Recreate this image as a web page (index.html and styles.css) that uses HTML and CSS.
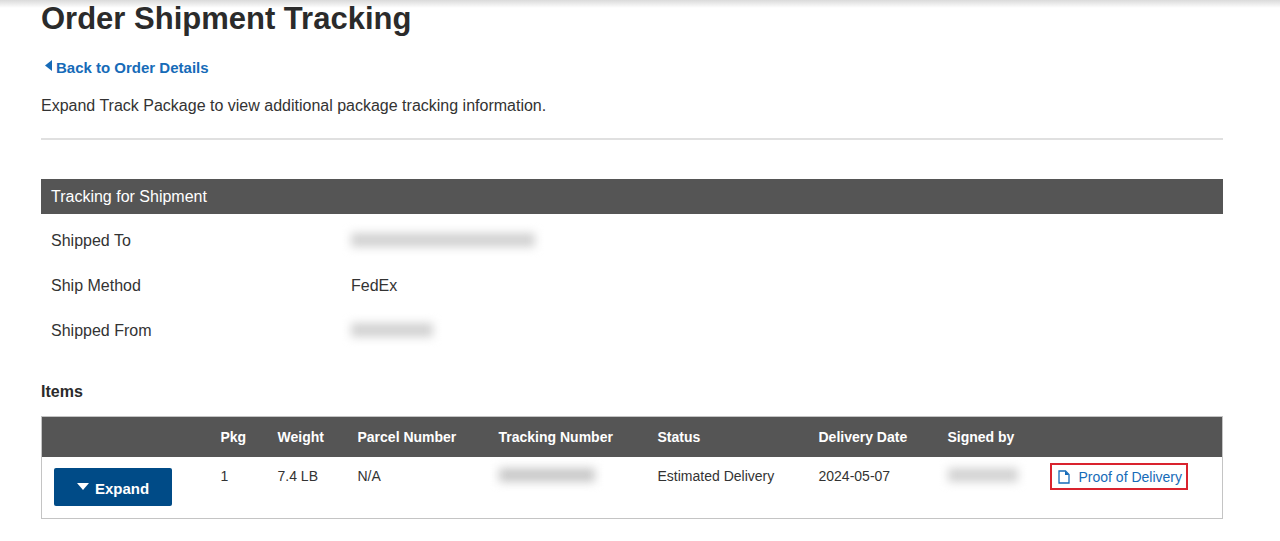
FILE: index.html
```html
<!DOCTYPE html>
<html lang="en">
<head>
    <meta charset="UTF-8">
    <meta name="viewport" content="width=device-width, initial-scale=1.0">
    <title>Order Shipment Tracking</title>
    <link rel="stylesheet" href="styles.css">
</head>
<body>
    <main class="page">
        <h1>Order Shipment Tracking</h1>

        <a href="#" class="back-link">
            <svg class="back-arrow" viewBox="0 0 8 12" aria-hidden="true"><path d="M7 0v11L0 5.5z"/></svg>
            Back to Order Details
        </a>
        <p class="intro">Expand Track Package to view additional package tracking information.</p>

        <section class="shipment">
            <h2>Tracking for Shipment</h2>
            <dl>
                <dt>Shipped To</dt>
                <dd><span class="redacted redacted-customer"></span></dd>
                <dt>Ship Method</dt>
                <dd>FedEx</dd>
                <dt>Shipped From</dt>
                <dd><span class="redacted redacted-sender"></span></dd>
            </dl>
        </section>

        <h3>Items</h3>
        <table class="items">
            <colgroup>
                <col class="col-action">
                <col class="col-pkg">
                <col class="col-weight">
                <col class="col-parcel">
                <col class="col-tracking">
                <col class="col-status">
                <col class="col-date">
                <col class="col-signed">
                <col>
            </colgroup>
            <thead>
                <tr>
                    <th></th>
                    <th>Pkg</th>
                    <th>Weight</th>
                    <th>Parcel Number</th>
                    <th>Tracking Number</th>
                    <th>Status</th>
                    <th>Delivery Date</th>
                    <th>Signed by</th>
                    <th></th>
                </tr>
            </thead>
            <tbody>
                <tr>
                    <td>
                        <button type="button" class="btn">
                            <svg class="btn-arrow" viewBox="0 0 12 8" aria-hidden="true"><path d="M0 0h12L6 7z"/></svg>
                            Expand
                        </button>
                    </td>
                    <td>1</td>
                    <td>7.4 LB</td>
                    <td>N/A</td>
                    <td><span class="redacted redacted-tracking"></span></td>
                    <td>Estimated Delivery</td>
                    <td>2024-05-07</td>
                    <td><span class="redacted redacted-signed"></span></td>
                    <td class="proof-cell">
                        <a href="#" class="proof">
                            <svg class="proof-icon" viewBox="0 0 12 14" aria-hidden="true">
                                <path d="M1 1h6.500L11 4.500V13H1z" fill="none" stroke="currentColor" stroke-width="1.300"/>
                                <path d="M7 1v4h4z" fill="currentColor"/>
                            </svg>
                            Proof of Delivery
                        </a>
                    </td>
                </tr>
            </tbody>
        </table>
    </main>
</body>
</html>
```
FILE: styles.css
```css
* {
    box-sizing: border-box;
}
body {
    margin: 0;
    font-family: "Liberation Sans", Arial, sans-serif;
    font-size: 16px;
    line-height: 20px;
    color: #333;
    background: linear-gradient(#dadada, #fff 8px) no-repeat #fff;
}
.page {
    padding: 0 57px 20px 41px;
}
h1 {
    margin: 0;
    font-size: 31px;
    line-height: 38px;
    color: #2b2b2b;
}
a {
    color: #166bb8;
    text-decoration: none;
}
a:hover {
    text-decoration: underline;
}
.back-link {
    display: flex;
    gap: 3px;
    margin-top: 20px;
    padding-left: 4px;
    font-size: 15px;
    font-weight: bold;
}
.back-arrow {
    width: 8px;
    height: 12px;
    margin-top: 2px;
    fill: currentColor;
}
.intro {
    margin: 18px 0 39px;
    padding-bottom: 22px;
    border-bottom: 2px solid #e0e0e0;
}
.shipment h2 {
    margin: 0;
    padding: 8px 10px 7px;
    font-size: 16px;
    font-weight: normal;
    background-color: #555;
    color: #fff;
}
dl {
    display: grid;
    grid-template-columns: 300px 1fr;
    row-gap: 25px;
    margin: 17px 0 41px;
    padding-left: 10px;
}
dd {
    margin: 0;
}
/* hidden customer data */
.redacted {
    display: block;
    height: 14px;
    margin-top: 2px;
    background-color: #d2d2d2;
    filter: blur(5px);
}
.redacted-customer {
    width: 184px;
}
.redacted-sender {
    width: 82px;
}
.redacted-tracking {
    width: 96px;
    background-color: #c9c9c9;
}
.redacted-signed {
    width: 70px;
}
h3 {
    margin: 0 0 14px;
    font-size: 16px;
    color: #2b2b2b;
}
.items {
    width: 100%;
    table-layout: fixed;
    border-collapse: collapse;
    border: 1px solid #c4c4c4;
    font-size: 14px;
}
th, td {
    padding: 10px 0 10px 12px;
    text-align: left;
    vertical-align: top;
    white-space: nowrap;
}
th {
    height: 40px;
    background-color: #555;
    color: #fff;
}
td {
    padding-top: 9px;
    padding-bottom: 12px;
}
.col-action {
    width: 167px;
}
.col-pkg {
    width: 57px;
}
.col-weight {
    width: 80px;
}
.col-parcel {
    width: 141px;
}
.col-tracking {
    width: 159px;
}
.col-status {
    width: 161px;
}
.col-date {
    width: 129px;
}
.col-signed {
    width: 102px;
}
.btn {
    display: flex;
    justify-content: center;
    gap: 6px;
    width: 118px;
    margin-top: 2px;
    padding: 11px 0 7px;
    border: none;
    border-radius: 2px;
    background-color: #004b87;
    color: #fff;
    font: bold 15px/20px "Liberation Sans", Arial, sans-serif;
    cursor: pointer;
}
.btn-arrow {
    width: 12px;
    height: 8px;
    margin-top: 4px;
    fill: currentColor;
}
.btn:hover {
    background-color: #003b6b;
}
.proof-cell {
    padding-top: 6px;
}
.proof {
    display: inline-flex;
    align-items: center;
    gap: 9px;
    height: 27px;
    padding: 0 4px 0 6px;
    border: 2px solid #d9232e;
}
.proof-icon {
    width: 12px;
    height: 14px;
}
```
